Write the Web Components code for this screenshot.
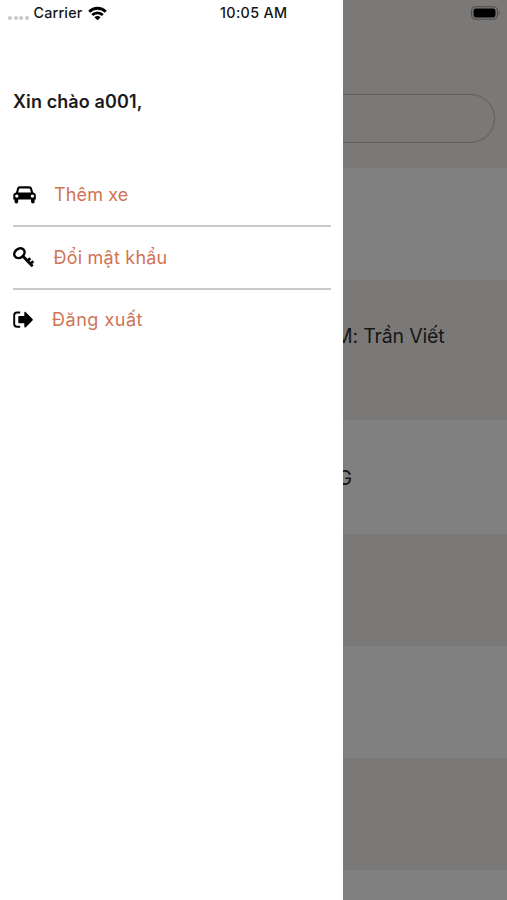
<!DOCTYPE html>
<html lang="vi">
<head>
<meta charset="utf-8">
<title>Menu</title>
<style>
body{margin:0;background:#808080;font-family:Inter,"Liberation Sans",sans-serif;overflow:hidden}
</style>
</head>
<body>
<app-screen></app-screen>
<script>
const define = (name, html, init) => customElements.define(name, class extends HTMLElement {
  connectedCallback() {
    if (this.shadowRoot) return;
    this.attachShadow({ mode: 'open' }).innerHTML = html;
    if (init) init(this);
  }
});

/* One line of text whose tracking is set so that it spans the given width. */
define('tracked-text', `<style>
:host{display:block;white-space:nowrap;line-height:24px}
span{display:inline-block}
</style><span><slot></slot></span>`, el => {
  const span = el.shadowRoot.querySelector('span');
  const n = [...el.textContent].length;
  const w = span.getBoundingClientRect().width;
  span.style.letterSpacing = ((+el.getAttribute('span') - w) / n) + 'px';
});

define('menu-icon', `<style>
:host{display:block;width:24px;height:24px;flex:none}
svg{display:none;width:24px;height:24px;overflow:visible}
:host([name=car]) .car,:host([name=key]) .key,:host([name=exit]) .exit{display:block}
</style>
<svg class="car" viewBox="0 0 24 24"><path fill-rule="evenodd" d="M6.8 3.3H16.2C17.8 3.3 18.6 4 19 5.3L20.2 9.5C22 9.8 22.8 11.1 22.8 12.8V16.5H21.7V18.5C21.7 21.1 18 21.1 18 18.5V16.5H5.2V18.5C5.2 21.1 1.5 21.1 1.5 18.5V16.5H.3V12.8C.3 11.1 1.2 9.8 3 9.5L4.1 5.3C4.5 4 5.3 3.3 6.8 3.3ZM7 5.4C6.4 5.4 6.1 5.7 6 6.2L5.2 9.4H18L17.1 6.2C17 5.7 16.7 5.4 16.1 5.4ZM3.8 11.4A1.7 1.7 0 1 0 3.8 14.8A1.7 1.7 0 1 0 3.8 11.4ZM19.4 11.4A1.7 1.7 0 1 0 19.4 14.8A1.7 1.7 0 1 0 19.4 11.4Z"/></svg>
<svg class="key" viewBox="0 0 24 24" fill="none" stroke="#000" stroke-width="2.5"><ellipse cx="6.4" cy="8.2" rx="5.5" ry="4.4" transform="rotate(-38 6.4 8.2)"/><path d="M9.7 11.1L19.6 21.2M14.4 16L17.3 13.3M17.4 18.8L20.3 16.3" stroke-width="2.8"/></svg>
<svg class="exit" viewBox="0 0 24 24"><path d="M7.2 4.5H4C2.2 4.5 1.2 5.5 1.2 7.2V16C1.2 17.7 2.2 18.7 4 18.7H7.2" fill="none" stroke="#000" stroke-width="1.9"/><path d="M6 8.1H11.3V4.8C11.3 3.7 12.2 3.6 12.8 4.2L19.5 10.9Q20.2 11.7 19.5 12.5L12.8 19.2C12.2 19.8 11.3 19.7 11.3 18.6V15.3H6Q5.3 15.3 5.3 14.6V8.8Q5.3 8.1 6 8.1Z"/></svg>`);

define('menu-item', `<style>
:host{display:flex;align-items:center;height:60.5px;border-bottom:2px solid #c9c9c9;color:#d07355;font-size:18px}
:host([last]){border-bottom:0}
.label{margin-left:var(--gap,17px);padding-top:.6px}
</style><slot name="icon"></slot><div class="label"><slot></slot></div>`);

define('side-drawer', `<style>
:host{display:block;position:absolute;left:0;top:0;width:343px;height:900px;background:#fff;box-sizing:border-box;padding:90px 12px 0 13px}
.hello{color:#1b191a;font-size:18px;font-weight:600;margin-bottom:50.5px}
</style>
<div class="hello"><tracked-text span="129.5">Xin chào a001,</tracked-text></div>
<menu-item><menu-icon slot="icon" name="car"></menu-icon><tracked-text span="74.5">Thêm xe</tracked-text></menu-item>
<menu-item style="--gap:16.5px"><menu-icon slot="icon" name="key"></menu-icon><tracked-text span="114">Đổi mật khẩu</tracked-text></menu-item>
<menu-item last style="--gap:15px"><menu-icon slot="icon" name="exit"></menu-icon><tracked-text span="91">Đăng xuất</tracked-text></menu-item>`);

define('list-row', `<style>
:host{display:flex;box-sizing:border-box;flex:none;align-items:center;background:#808080;color:#161616;font-size:19.5px;padding-left:340px}
:host([shade]){background:#7b7977}
</style><slot></slot>`);

define('search-box', `<style>
:host{display:block;box-sizing:border-box;width:483px;height:49px;margin:94px 12px 0;border:1px solid #5e5d5b;border-radius:25px}
</style>`);

define('list-page', `<style>
:host{display:flex;flex-direction:column;height:900px;overflow:hidden}
header{height:168px;flex:none;background:#7b7977;display:flex;align-items:flex-start}
</style>
<header><search-box></search-box></header>
<list-row style="height:112px"></list-row>
<list-row shade style="height:140px;padding-left:335px;padding-bottom:28px"><tracked-text span="109.5">M: Trần Viết</tracked-text></list-row>
<list-row style="height:114px;padding-left:337.5px;padding-top:2px"><tracked-text span="15">G</tracked-text></list-row>
<list-row shade style="height:112px"></list-row>
<list-row style="height:112px"></list-row>
<list-row shade style="height:112px"></list-row>
<list-row style="height:30px"></list-row>`);

define('status-bar', `<style>
:host{position:absolute;left:0;top:0;width:507px;height:26px;display:flex;align-items:center;box-sizing:border-box;padding:0 6px 0 8px;color:#151515;font-size:14.3px;font-weight:500}
.dots{display:flex;gap:1.5px;margin:9px 5px 0 0}
.dots i{width:4px;height:4px;border-radius:2px;background:#c8c8c8}
.wifi{width:19px;height:15px;margin-left:5px}
.time{margin-left:113.5px}
.battery{width:31px;height:14px;margin-left:auto}
</style>
<div class="dots"><i></i><i></i><i></i><i></i></div>
<tracked-text span="49">Carrier</tracked-text>
<svg class="wifi" viewBox="0 0 19 15"><g fill="none" stroke="#000" stroke-width="2.8"><path d="M1.2 5.7C5.8 1.1 13.2 1.1 17.8 5.7"/><path d="M4.2 9C7.2 6.1 11.8 6.1 14.8 9"/></g><path d="M9.5 14.2L6.4 11.3C8.2 9.7 10.8 9.7 12.6 11.3Z"/></svg>
<div class="time"><tracked-text span="67.5">10:05 AM</tracked-text></div>
<svg class="battery" viewBox="0 0 31 14"><rect x="1.6" y=".7" width="25.8" height="12.6" rx="4" fill="none" stroke="#4d4c4b" stroke-width="1.1"/><rect x="3.5" y="2.6" width="22" height="8.8" rx="2.3"/><path d="M28.6 4.8Q30.6 7 28.6 9.2Z" fill="#4d4c4b"/></svg>`);

define('app-screen', `<style>
:host{display:block;position:relative;width:507px;height:900px;overflow:hidden}
</style><list-page></list-page><side-drawer></side-drawer><status-bar></status-bar>`);
</script>
</body>
</html>
